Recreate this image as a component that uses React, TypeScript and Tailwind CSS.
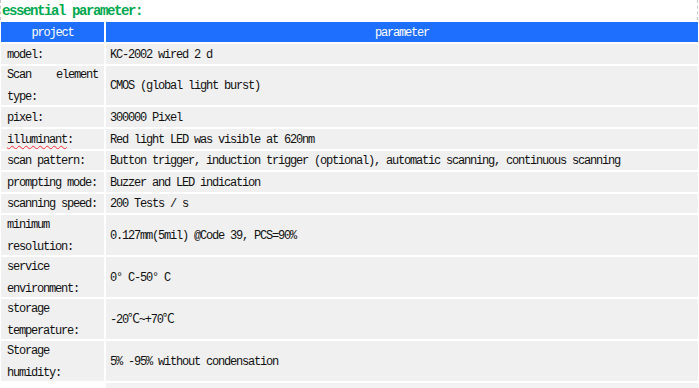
import type { ReactNode } from 'react'

type Row = {
    label: ReactNode
    value: string
    tall?: boolean
    h: string
}

const rows: Row[] = [
    { label: 'model:', value: 'KC-2002 wired 2 d', h: 'h-[20px]' },
    { label: 'Scan element type:', value: 'CMOS (global light burst)', tall: true, h: 'h-[39px]' },
    { label: 'pixel:', value: '300000 Pixel', h: 'h-[20px]' },
    {
        label: (
            <>
                <span className="underline decoration-wavy decoration-red-500 decoration-1 underline-offset-2">illuminant</span>:
            </>
        ),
        value: 'Red light LED was visible at 620nm',
        h: 'h-[20px]',
    },
    {
        label: 'scan pattern:',
        value: 'Button trigger, induction trigger (optional), automatic scanning, continuous scanning',
        h: 'h-[19px]',
    },
    { label: 'prompting mode:', value: 'Buzzer and LED indication', h: 'h-[20px]' },
    { label: 'scanning speed:', value: '200 Tests / s', h: 'h-[19px]' },
    { label: 'minimum resolution:', value: '0.127mm(5mil) @Code 39, PCS=90%', tall: true, h: 'h-[40px]' },
    { label: 'service environment:', value: '0° C-50° C', tall: true, h: 'h-[40px]' },
    { label: 'storage temperature:', value: '-20℃~+70℃', tall: true, h: 'h-[40px]' },
    { label: 'Storage humidity:', value: '5% -95% without condensation', tall: true, h: 'h-[40px]' },
]

export default function App() {
    return (
        <div
            className="w-[699px] h-[388px] overflow-hidden bg-white text-[12px] tracking-[-1.2px] text-[#111]"
            style={{ fontFamily: '"Liberation Mono", "Noto Sans CJK SC", monospace' }}
        >
            <div className="flex flex-col gap-[2px]">
                <div className="h-[20px] mr-[1px] border-x border-dashed border-[#c8c8c8] flex items-center pl-[1px] pt-[1px]">
                    <span className="text-[14px] tracking-[-1.4px] font-bold text-[#00a84f] leading-none">
                        essential parameter:
                    </span>
                </div>

                <div className="flex gap-[2px] h-[20px] px-[1px] text-white">
                    <div className="w-[103px] bg-[#1f6fff] flex items-center justify-center pt-[1px]">project</div>
                    <div className="flex-1 bg-[#1f6fff] flex items-center justify-center pt-[1px]">parameter</div>
                </div>

                {rows.map((r, i) => (
                    <div key={i} className={`flex gap-[2px] px-[1px] ${r.h}`}>
                        <div className="w-[103px] bg-[#f0f0f0] flex items-center pl-[6px] pr-[6px] pt-[1px]">
                            <div className={`w-full text-justify ${r.tall ? 'leading-[22px]' : 'leading-[20px]'}`}>
                                {r.label}
                            </div>
                        </div>
                        <div className="flex-1 bg-[#f0f0f0] flex items-center pl-[4px] pt-[1px] whitespace-nowrap">
                            {r.value}
                        </div>
                    </div>
                ))}

                <div className="flex gap-[2px] h-[20px] px-[1px]">
                    <div className="w-[103px]" />
                    <div className="flex-1 bg-[#f2f2f2]" />
                </div>
            </div>
        </div>
    )
}
